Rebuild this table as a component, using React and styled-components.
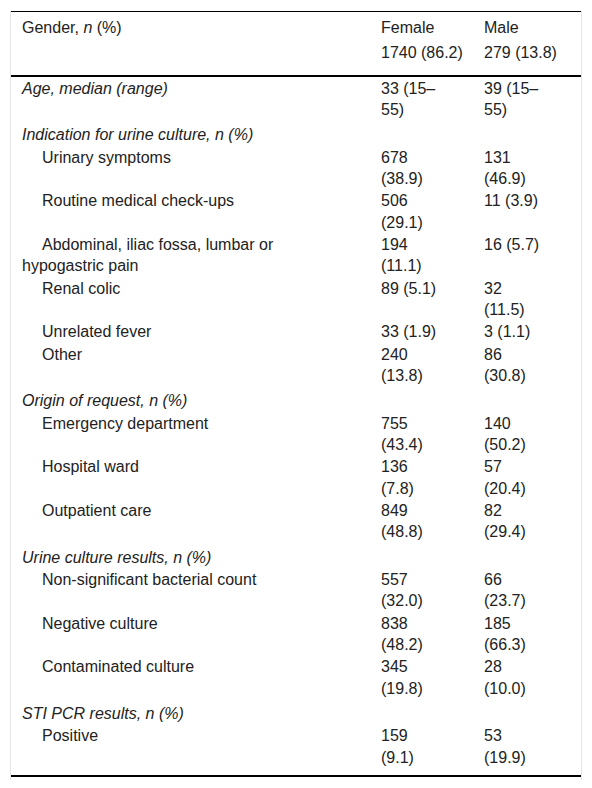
import React from "react";
import styled, { createGlobalStyle } from "styled-components";

const Global = createGlobalStyle`
  html, body { margin: 0; padding: 0; background: #fff; }
  body { font-family: "Liberation Sans", Arial, sans-serif; color: #222; }
`;

const Page = styled.div`
  padding: 11px 10px 0 10px;
`;

const Frame = styled.div`
  border-left: 1px solid #e4e4e4;
  border-right: 1px solid #e4e4e4;
  padding-bottom: 3px;
`;

const Table = styled.table`
  width: 100%;
  border-collapse: separate;
  border-spacing: 0;
  table-layout: fixed;
  font-size: 16px;
  line-height: 21.33px;
`;

const Col = styled.col`
  width: ${(p) => p.$w}px;
`;

const Th = styled.th`
  text-align: left;
  font-weight: normal;
  vertical-align: top;
  white-space: nowrap;
  padding: ${(p) => (p.$second ? "4px 0 11px 11px" : "5px 0 0 11px")};
  border-top: ${(p) => (p.$second ? "none" : "1px solid #000")};
  border-bottom: ${(p) => (p.$second ? "2px solid #000" : "none")};
`;

const Td = styled.td`
  vertical-align: top;
  text-align: left;
  padding-top: ${(p) => (p.$section ? "4px" : "1px")};
  padding-left: 11px;
  padding-right: ${(p) => p.$pr}px;
  padding-bottom: ${(p) => (p.$last ? "7px" : "0")};
  border-bottom: ${(p) => (p.$last ? "2px solid #000" : "none")};
  font-style: ${(p) => (p.$italic ? "italic" : "normal")};
  text-indent: ${(p) => (p.$indent ? "20px" : "0")};
`;

const rows = [
  { label: "Age, median (range)", f: "33 (15–55)", m: "39 (15–55)", italic: true, top: true },
  { label: "Indication for urine culture, n (%)", italic: true, section: true },
  { label: "Urinary symptoms", f: "678 (38.9)", m: "131 (46.9)", indent: true },
  { label: "Routine medical check-ups", f: "506 (29.1)", m: "11 (3.9)", indent: true },
  { label: "Abdominal, iliac fossa, lumbar or hypogastric pain", f: "194 (11.1)", m: "16 (5.7)", indent: true },
  { label: "Renal colic", f: "89 (5.1)", m: "32 (11.5)", indent: true },
  { label: "Unrelated fever", f: "33 (1.9)", m: "3 (1.1)", indent: true },
  { label: "Other", f: "240 (13.8)", m: "86 (30.8)", indent: true },
  { label: "Origin of request, n (%)", italic: true, section: true },
  { label: "Emergency department", f: "755 (43.4)", m: "140 (50.2)", indent: true },
  { label: "Hospital ward", f: "136 (7.8)", m: "57 (20.4)", indent: true },
  { label: "Outpatient care", f: "849 (48.8)", m: "82 (29.4)", indent: true },
  { label: "Urine culture results, n (%)", italic: true, section: true },
  { label: "Non-significant bacterial count", f: "557 (32.0)", m: "66 (23.7)", indent: true },
  { label: "Negative culture", f: "838 (48.2)", m: "185 (66.3)", indent: true },
  { label: "Contaminated culture", f: "345 (19.8)", m: "28 (10.0)", indent: true },
  { label: "STI PCR results, n (%)", italic: true, section: true },
  { label: "Positive", f: "159 (9.1)", m: "53 (19.9)", indent: true },
];

export default function App() {
  return (
    <>
      <Global />
      <Page>
        <Frame>
          <Table>
            <colgroup>
              <Col $w={359} />
              <Col $w={103} />
              <Col $w={108} />
            </colgroup>
            <thead>
              <tr>
                <Th>
                  Gender, <i>n</i> (%)
                </Th>
                <Th>Female</Th>
                <Th>Male</Th>
              </tr>
              <tr>
                <Th $second></Th>
                <Th $second>1740 (86.2)</Th>
                <Th $second>279 (13.8)</Th>
              </tr>
            </thead>
            <tbody>
              {rows.map((r, i) => {
                const last = i === rows.length - 1;
                return (
                  <tr key={i}>
                    <Td $pr={20} $section={r.section} $italic={r.italic} $indent={r.indent} $last={last}>
                      {r.label}
                    </Td>
                    <Td $pr={32} $section={r.section} $last={last}>
                      {r.f || ""}
                    </Td>
                    <Td $pr={37} $section={r.section} $last={last}>
                      {r.m || ""}
                    </Td>
                  </tr>
                );
              })}
            </tbody>
          </Table>
        </Frame>
      </Page>
    </>
  );
}
